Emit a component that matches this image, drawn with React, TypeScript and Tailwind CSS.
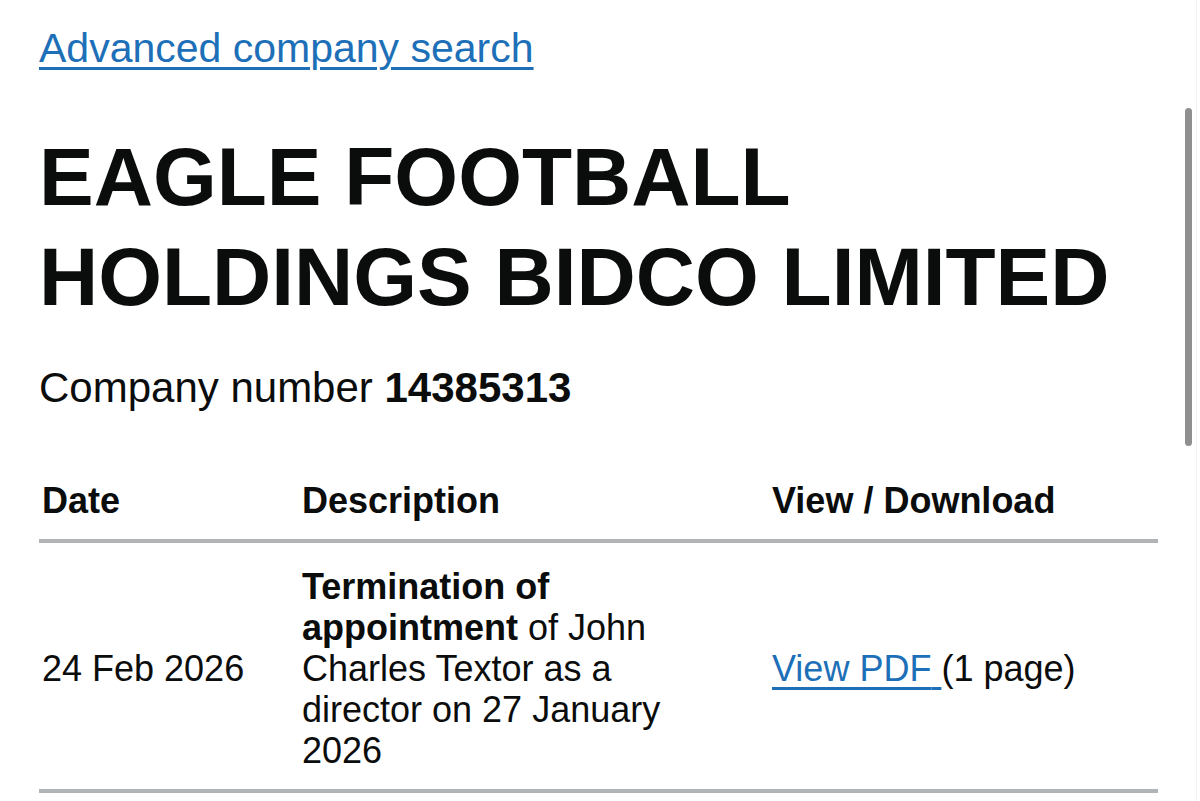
import React from 'react'

// Companies House filing history, zoomed mobile view
const FILINGS = [
  {
    date: '24 Feb 2026',
    type: 'Termination of appointment',
    rest: ' of John Charles Textor as a director on 27 January 2026',
    pages: '(1 page)',
  },
]

export default function App() {
  return (
    <main
      className="relative min-h-[801px] w-full overflow-hidden bg-white text-[#0b0c0c]"
      style={{ fontFamily: '"Liberation Sans", Arial, sans-serif' }}
    >
      <div className="pl-[39px] pr-[41px] pt-[24px]">
        <a
          href="#"
          className="text-[41px] leading-[48px] text-[#1d70b8] underline decoration-[3px] underline-offset-[5px]"
        >
          Advanced company search
        </a>

        <h1 className="mt-[55px] text-[82px] font-bold leading-[100px]">EAGLE FOOTBALL HOLDINGS BIDCO LIMITED</h1>

        <p className="mt-[36px] text-[42px] leading-[50px]">
          Company number <strong className="font-bold">14385313</strong>
        </p>

        <table className="mt-[51px] w-[1119px] border-collapse text-left text-[36px] leading-[41px]">
          <thead>
            <tr className="border-b-[4px] border-[#b1b4b6]">
              <th className="w-[263px] pl-[3px] pt-[16px] pb-[18px] align-top font-bold">Date</th>
              <th className="w-[470px] pt-[16px] pb-[18px] align-top font-bold">Description</th>
              <th className="pt-[16px] pb-[18px] align-top font-bold">View / Download</th>
            </tr>
          </thead>
          <tbody>
            {FILINGS.map(f => (
              <tr key={f.date} className="border-b-[4px] border-[#b1b4b6]">
                <td className="pl-[3px] pt-[23px] pb-[18px] align-middle">{f.date}</td>
                <td className="pt-[23px] pb-[18px] pr-[40px] align-middle">
                  <strong className="font-bold">{f.type}</strong>
                  {f.rest}
                </td>
                <td className="pt-[23px] pb-[18px] align-middle">
                  <a href="#" className="text-[#1d70b8] underline decoration-[3px] underline-offset-[6px]">
                    View PDF{' '}
                  </a>
                  {f.pages}
                </td>
              </tr>
            ))}
          </tbody>
        </table>
      </div>

      {/* overlay scrollbar */}
      <div className="absolute left-[1185px] top-[108px] h-[338px] w-[7px] rounded-full bg-[#8f8f8f]" />
      <div className="absolute left-[1196px] top-0 h-full w-px bg-[#f2f2f2]" />
    </main>
  )
}
